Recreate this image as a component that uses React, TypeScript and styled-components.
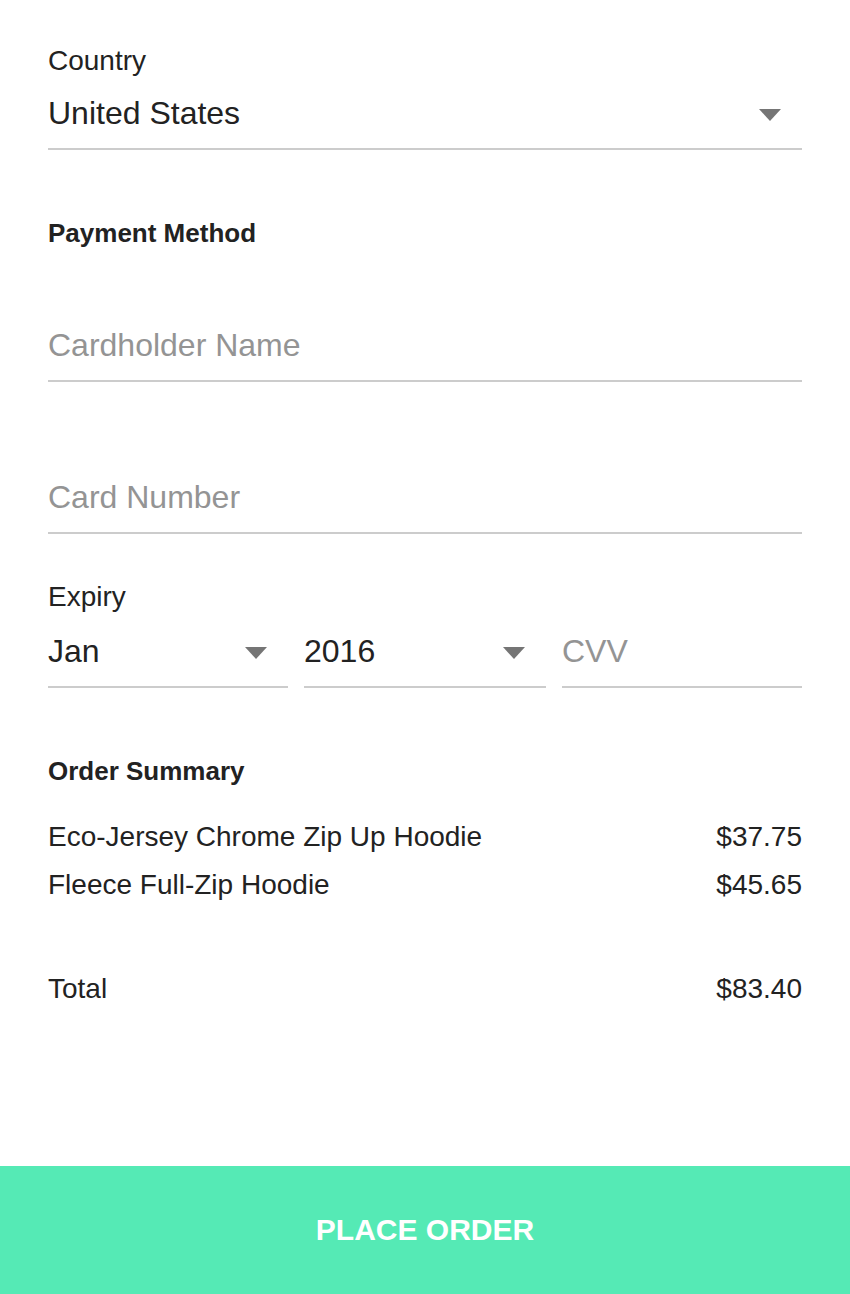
import React from "react";
import styled, { createGlobalStyle } from "styled-components";

const GlobalStyle = createGlobalStyle`
  html, body {
    margin: 0;
    padding: 0;
    background: #ffffff;
  }
  body {
    font-family: "Liberation Sans", Arial, sans-serif;
    color: #222222;
  }
  * { box-sizing: border-box; }
`;

const Page = styled.div`
  min-height: 100vh;
  display: flex;
  flex-direction: column;
`;

const Form = styled.div`
  flex: 1;
  display: flex;
  flex-direction: column;
  padding: 45px 48px 0;
`;

const Label = styled.div<{ $gap?: number }>`
  font-size: 28px;
  line-height: 32px;
  color: #222222;
  margin-top: ${(p) => p.$gap ?? 0}px;
`;

const SectionTitle = styled.div<{ $gap: number }>`
  font-size: 26px;
  line-height: 32px;
  font-weight: 700;
  color: #222222;
  margin-top: ${(p) => p.$gap}px;
`;

const FieldBox = styled.div<{ $gap: number }>`
  display: flex;
  align-items: center;
  height: 57px;
  padding-bottom: 15px;
  border-bottom: 2px solid #cccccc;
  margin-top: ${(p) => p.$gap}px;
  min-width: 0;
`;

const SelectValue = styled.span`
  flex: 1;
  font-size: 32px;
  line-height: 40px;
  color: #222222;
  white-space: nowrap;
`;

const Arrow = styled.svg`
  width: 22px;
  height: 12px;
  margin: 3px 21px 0 0;
  flex: none;
  fill: #757575;
`;

const TextInput = styled.input`
  flex: 1;
  min-width: 0;
  height: 40px;
  border: none;
  outline: none;
  padding: 0;
  margin: 0;
  background: transparent;
  font-family: "Liberation Sans", Arial, sans-serif;
  font-size: 32px;
  line-height: 40px;
  color: #222222;
  &::placeholder {
    color: #949494;
    opacity: 1;
  }
`;

const ExpiryRow = styled.div`
  display: grid;
  grid-template-columns: 240px 242px 240px;
  column-gap: 16px;
`;

const SummaryList = styled.div<{ $gap: number }>`
  display: flex;
  flex-direction: column;
  margin-top: ${(p) => p.$gap}px;
`;

const SummaryRow = styled.div<{ $gap?: number }>`
  display: flex;
  justify-content: space-between;
  font-size: 28px;
  line-height: 48px;
  color: #222222;
  margin-top: ${(p) => p.$gap ?? 0}px;
`;

const PlaceOrder = styled.button`
  display: flex;
  align-items: center;
  justify-content: center;
  width: 100%;
  height: 128px;
  border: none;
  margin: 0;
  padding: 0;
  background: #55eab5;
  color: #ffffff;
  font-family: "Liberation Sans", Arial, sans-serif;
  font-size: 30px;
  font-weight: 700;
  cursor: pointer;
`;

const DropArrow = () => (
  <Arrow viewBox="0 0 22 12" aria-hidden>
    <polygon points="0,0 22,0 11,12" />
  </Arrow>
);

const Select = ({ value, gap = 0 }: { value: string; gap?: number }) => (
  <FieldBox $gap={gap}>
    <SelectValue>{value}</SelectValue>
    <DropArrow />
  </FieldBox>
);

const items = [
  { name: "Eco-Jersey Chrome Zip Up Hoodie", price: "$37.75" },
  { name: "Fleece Full-Zip Hoodie", price: "$45.65" },
];

export default function App() {
  return (
    <>
      <GlobalStyle />
      <Page>
        <Form>
          <Label>Country</Label>
          <Select value="United States" gap={16} />

          <SectionTitle $gap={67}>Payment Method</SectionTitle>
          <FieldBox $gap={76}>
            <TextInput placeholder="Cardholder Name" />
          </FieldBox>
          <FieldBox $gap={95}>
            <TextInput placeholder="Card Number" />
          </FieldBox>

          <Label $gap={47}>Expiry</Label>
          <ExpiryRow>
            <Select value="Jan" gap={18} />
            <Select value="2016" gap={18} />
            <FieldBox $gap={18}>
              <TextInput placeholder="CVV" />
            </FieldBox>
          </ExpiryRow>

          <SectionTitle $gap={67}>Order Summary</SectionTitle>
          <SummaryList $gap={26}>
            {items.map((it) => (
              <SummaryRow key={it.name}>
                <span>{it.name}</span>
                <span>{it.price}</span>
              </SummaryRow>
            ))}
            <SummaryRow $gap={56}>
              <span>Total</span>
              <span>$83.40</span>
            </SummaryRow>
          </SummaryList>
        </Form>
        <PlaceOrder>PLACE ORDER</PlaceOrder>
      </Page>
    </>
  );
}
